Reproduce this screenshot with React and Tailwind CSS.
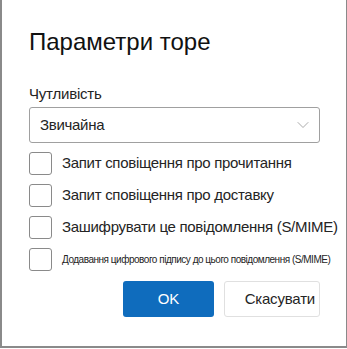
import { ChevronDown } from "lucide-react";

function Check({ label, small }) {
  return (
    <label className="flex items-center h-[23px] gap-[10px]">
      <span className="shrink-0 size-[23px] rounded-[3px] border border-[#8a8a8a] bg-white" />
      <span className={small ? "text-[10px] text-[#242424] whitespace-nowrap tracking-[-0.48px]" : "text-[15px] text-[#242424] whitespace-nowrap tracking-[-0.3px]"}>
        {label}
      </span>
    </label>
  );
}

export default function App() {
  return (
    <div className="w-[347px] h-[349px] bg-white font-['Liberation_Sans',Arial,sans-serif] overflow-hidden">
      <div className="h-[348px] border-l-2 border-r border-b-2 border-[#8a8a8a] pl-[27px] pr-[26px] pt-[28px]">
        <h1 className="text-[24px] leading-[28px] text-[#111] font-normal">Параметри торе</h1>

        <p className="mt-[29px] text-[15px] leading-[18px] text-[#242424] tracking-[-0.2px]">Чутливість</p>

        <div className="mt-[4px] h-[36px] flex items-center justify-between rounded-[3px] border border-[#a0a0a0] pl-[10px] pr-[6px]">
          <span className="text-[15px] text-[#242424] tracking-[-0.3px]">Звичайна</span>
          <ChevronDown className="size-[20px] text-[#9a9a9a]" strokeWidth={1} />
        </div>

        <div className="mt-[9px] flex flex-col gap-[9px]">
          <Check label="Запит сповіщення про прочитання" />
          <Check label="Запит сповіщення про доставку" />
          <Check label="Зашифрувати це повідомлення (S/MIME)" />
          <Check label="Додавання цифрового підпису до цього повідомлення (S/MIME)" small />
        </div>

        <div className="mt-[10px] flex justify-end gap-[10px]">
          <button className="w-[91px] h-[36px] rounded-[3px] bg-[#0f6cbd] text-white text-[15px]">OK</button>
          <button className="w-[96px] h-[36px] rounded-[3px] border border-[#e0e0e0] bg-white text-[#242424] text-[15px] tracking-[-0.2px] flex items-center justify-end pr-[4px]">
            Скасувати
          </button>
        </div>
      </div>
    </div>
  );
}
